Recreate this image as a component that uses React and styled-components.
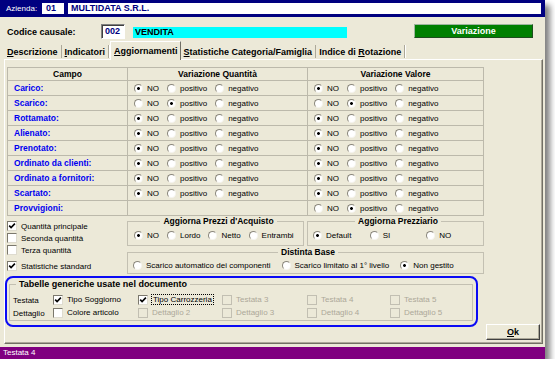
import React from 'react'
import styled, { createGlobalStyle } from 'styled-components'

const GlobalStyle = createGlobalStyle`
    html, body {
        margin: 0;
        padding: 0;
        background: #fff;
    }
    body {
        font-family: 'Liberation Sans', Arial, sans-serif;
    }
`

const Window = styled.div`
    width: 545px;
    height: 359px;
    display: flex;
    flex-direction: column;
    background: #ece9d8;
    box-shadow: 5px 5px 6px rgba(0, 0, 0, 0.5);
    font-size: 8px;
    color: #000;
`

const TopBar = styled.div`
    height: 17px;
    flex: none;
    display: flex;
    align-items: center;
    padding: 0 4px 0 6px;
    background: #000080;
`

const TopLabel = styled.span`
    width: 36px;
    color: #fff;
    font-size: 8px;
`

const TopField = styled.div`
    height: 11px;
    line-height: 11px;
    margin-left: ${(props) => props.$gap}px;
    padding-left: ${(props) => props.$pad}px;
    width: ${(props) => (props.$w ? props.$w + 'px' : 'auto')};
    flex: ${(props) => (props.$w ? 'none' : 1)};
    background: #fff;
    color: #000080;
    font-size: 9px;
    font-weight: bold;
`

const CausaleRow = styled.div`
    height: 25px;
    flex: none;
    box-sizing: border-box;
    padding: 3px 0 0 7px;
    display: flex;
    align-items: center;
`

const CausaleLabel = styled.span`
    width: 94px;
    font-size: 9px;
    font-weight: bold;
    padding-top: 2px;
`

const CodeBox = styled.div`
    width: 24px;
    height: 15px;
    box-sizing: border-box;
    border: 1px solid;
    border-color: #808080 #fff #fff #808080;
    box-shadow: inset 1px 1px 0 #404040;
    background: #fff;
    color: #000080;
    font-size: 9px;
    font-weight: bold;
    line-height: 13px;
    padding-left: 3px;
`

const CausaleName = styled.div`
    width: 212px;
    height: 11px;
    margin: 2px 0 0 8px;
    padding-left: 2px;
    background: #00ffff;
    font-size: 9px;
    font-weight: bold;
    line-height: 11px;
`

const ModeButton = styled.div`
    width: 119px;
    height: 14px;
    margin: 0 12px 0 auto;
    box-sizing: border-box;
    border: 1px solid;
    border-color: #9db59d #1d4d1d #1d4d1d #9db59d;
    background: #008000;
    color: #fff;
    font-size: 9px;
    font-weight: bold;
    line-height: 12px;
    text-align: center;
`

const TabStrip = styled.div`
    height: 17px;
    flex: none;
    display: flex;
    align-items: flex-end;
    padding-left: 4px;
`

const Tab = styled.div`
    position: relative;
    z-index: ${(props) => (props.$active ? 1 : 0)};
    height: ${(props) => (props.$active ? 19 : 13)}px;
    margin-bottom: ${(props) => (props.$active ? -1 : 1)}px;
    margin-left: ${(props) => (props.$active ? 1 : 0)}px;
    box-sizing: border-box;
    display: flex;
    align-items: center;
    padding: 0 ${(props) => (props.$active ? 2 : 3)}px 0 3px;
    font-size: 9px;
    font-weight: bold;
    background: #ece9d8;
    border-right: 1px solid ${(props) => (props.$active ? '#716f64' : '#aca899')};
    border-left: ${(props) => (props.$active ? '1px solid #fff' : 'none')};
    border-top: ${(props) => (props.$active ? '1px solid #fff' : 'none')};
    box-shadow: ${(props) => (props.$active ? 'none' : '1px 0 0 #fff')};
`

const Panel = styled.div`
    flex: 1;
    margin: 0 2px 3px 4px;
    padding: 7px 0 0 0;
    display: flex;
    flex-direction: column;
    border-top: 1px solid #fff;
    border-left: 1px solid #fff;
    border-right: 1px solid #716f64;
    border-bottom: 1px solid #716f64;
    box-shadow: inset -1px -1px 0 #aca899;
`

const Grid = styled.div`
    display: grid;
    grid-template-columns: 120px 180px 176px;
    margin-left: 2px;
    width: fit-content;
    border-top: 1px solid #bcb9ab;
    border-left: 1px solid #bcb9ab;
`

const Cell = styled.div`
    height: ${(props) => (props.$head ? 13 : 15)}px;
    box-sizing: border-box;
    display: flex;
    align-items: center;
    justify-content: ${(props) => (props.$head ? 'center' : 'flex-start')};
    padding-left: ${(props) => (props.$head ? 0 : 6)}px;
    border-right: 1px solid #bcb9ab;
    border-bottom: 1px solid #bcb9ab;
    font-size: ${(props) => (props.$head || props.$field ? 8.5 : 8)}px;
    font-weight: ${(props) => (props.$head || props.$field ? 'bold' : 'normal')};
    color: ${(props) => (props.$field ? '#0000f0' : '#000')};
    gap: 8px;
`

const Option = styled.span`
    display: inline-flex;
    align-items: center;
    gap: 4px;
    font-size: 8px;
    white-space: nowrap;
`

const RadioMark = styled.span`
    flex: none;
    width: 9px;
    height: 9px;
    box-sizing: border-box;
    border-radius: 50%;
    border: 1px solid;
    border-color: #8a877b #f5f4ee #f5f4ee #8a877b;
    background: ${(props) =>
        props.$on
            ? 'radial-gradient(circle, #000 0 1.1px, #fff 1.7px)'
            : '#fff'};
`

const BoxMark = styled.span`
    flex: none;
    width: 10px;
    height: 10px;
    box-sizing: border-box;
    display: flex;
    align-items: center;
    justify-content: center;
    border: 1px solid;
    border-color: ${(props) =>
        props.$off ? '#c2bfb2' : '#7b786d #dedbcf #dedbcf #7b786d'};
    background: ${(props) => (props.$off ? '#ece9d8' : '#fff')};
`

const CheckText = styled.span`
    color: ${(props) => (props.$off ? '#aca899' : '#000')};
    outline: ${(props) => (props.$focus ? '1px dotted #000' : 'none')};
    padding: ${(props) => (props.$focus ? '0 1px' : '0')};
    font-size: 8px;
    white-space: nowrap;
`

const CheckRow = styled.label`
    height: 12px;
    display: flex;
    align-items: center;
    gap: ${(props) => props.$gap || 4}px;
    margin-top: ${(props) => props.$top || 0}px;
`

const Lower = styled.div`
    display: flex;
    margin-left: 2px;
`

const Checks = styled.div`
    width: 120px;
    display: flex;
    flex-direction: column;
    padding-top: 4px;
`

const Options = styled.div`
    width: 357px;
    display: flex;
    flex-direction: column;
`

const GroupRow = styled.div`
    display: flex;
    gap: 3px;
`

const Group = styled.fieldset`
    width: ${(props) => (props.$w ? props.$w + 'px' : 'auto')};
    box-sizing: border-box;
    min-width: 0;
    margin: ${(props) => props.$top || 0}px 0 0 0;
    padding: ${(props) => props.$pad || '3px 0 4px 5px'};
    border: 1px solid #c3c0b2;
    display: ${(props) => (props.$grid ? 'grid' : 'flex')};
    grid-template-columns: repeat(3, 1fr);
    align-items: center;
`

const Legend = styled.legend`
    margin: 0 auto 0 ${(props) => (props.$left ? '3px' : 'auto')};
    padding: 0 3px;
    font-size: ${(props) => props.$size || 8.5}px;
    font-weight: bold;
    line-height: 10px;
`

const OptionRow = styled.div`
    height: 10px;
    display: flex;
    align-items: center;
    gap: ${(props) => props.$gap}px;
`

const Bottom = styled.div`
    display: flex;
    align-items: flex-start;
    margin-top: 2px;
`

const BlueFrame = styled.div`
    width: 473px;
    height: 51px;
    box-sizing: border-box;
    padding: 1px 3px 0 2px;
    border: 2px solid #0a0af5;
    border-radius: 8px;
`

const TableBox = styled.fieldset`
    margin: 0;
    min-width: 0;
    padding: 4px 0 1px 3px;
    border: 1px solid #c3c0b2;
    display: grid;
    grid-template-columns: 40px 85px 84px 85px 83px auto;
    grid-auto-rows: 13px;
    align-items: center;
`

const RowLabel = styled.span`
    font-size: 8px;
    padding-top: 2px;
`

const OkButton = styled.div`
    width: 54px;
    height: 16px;
    margin: 48px 0 0 8px;
    box-sizing: border-box;
    border: 1px solid;
    border-color: #fff #404040 #404040 #fff;
    box-shadow: inset -1px -1px 0 #aca899;
    font-size: 9px;
    font-weight: bold;
    line-height: 14px;
    text-align: center;
`

const StatusBar = styled.div`
    height: 12px;
    flex: none;
    padding-left: 3px;
    background: #800080;
    color: #fff;
    font-size: 8px;
    line-height: 12px;
`

const Radio = ({ on, children }) => (
    <Option>
        <RadioMark $on={on} />
        {children}
    </Option>
)

const Check = ({ on, off, focus, gap, top, children }) => (
    <CheckRow $gap={gap} $top={top}>
        <BoxMark $off={off}>
            {on && (
                <svg width='8' height='8' viewBox='0 0 8 8'>
                    <path
                        d='M1.2 3.6 L3.1 5.6 L6.9 1.6'
                        stroke='#000'
                        strokeWidth='1.6'
                        fill='none'
                    />
                </svg>
            )}
        </BoxMark>
        <CheckText $off={off} $focus={focus}>
            {children}
        </CheckText>
    </CheckRow>
)

const rows = [
    ['Carico:', 'NO', 'NO'],
    ['Scarico:', 'positivo', 'positivo'],
    ['Rottamato:', 'NO', 'NO'],
    ['Alienato:', 'NO', 'NO'],
    ['Prenotato:', 'NO', 'NO'],
    ['Ordinato da clienti:', 'NO', 'NO'],
    ['Ordinato a fornitori:', 'NO', 'NO'],
    ['Scartato:', 'NO', 'NO'],
    ['Provvigioni:', null, 'positivo'],
]

const choices = ['NO', 'positivo', 'negativo']

const Choice = ({ value }) =>
    value
        ? choices.map((c) => (
              <Radio key={c} on={c === value}>
                  {c}
              </Radio>
          ))
        : null

const App = () => {
    return (
        <>
            <GlobalStyle />
            <Window>
                <TopBar>
                    <TopLabel>Azienda:</TopLabel>
                    <TopField $w={18} $gap={0} $pad={4}>
                        01
                    </TopField>
                    <TopField $gap={4} $pad={3}>
                        MULTIDATA S.R.L.
                    </TopField>
                </TopBar>

                <CausaleRow>
                    <CausaleLabel>Codice causale:</CausaleLabel>
                    <CodeBox>002</CodeBox>
                    <CausaleName>VENDITA</CausaleName>
                    <ModeButton>Variazione</ModeButton>
                </CausaleRow>

                <TabStrip>
                    <Tab>
                        <span>
                            <u>D</u>escrizione
                        </span>
                    </Tab>
                    <Tab>
                        <span>
                            <u>I</u>ndicatori
                        </span>
                    </Tab>
                    <Tab $active>
                        <span>
                            <u>A</u>ggiornamenti
                        </span>
                    </Tab>
                    <Tab>
                        <span>
                            <u>S</u>tatistiche Categoria/Famiglia
                        </span>
                    </Tab>
                    <Tab>
                        <span>
                            Indice di <u>R</u>otazione
                        </span>
                    </Tab>
                </TabStrip>

                <Panel>
                    <Grid>
                        <Cell $head>Campo</Cell>
                        <Cell $head>Variazione Quantità</Cell>
                        <Cell $head>Variazione Valore</Cell>
                        {rows.map(([name, qty, val]) => (
                            <React.Fragment key={name}>
                                <Cell $field>{name}</Cell>
                                <Cell>
                                    <Choice value={qty} />
                                </Cell>
                                <Cell>
                                    <Choice value={val} />
                                </Cell>
                            </React.Fragment>
                        ))}
                    </Grid>

                    <Lower>
                        <Checks>
                            <Check on>Quantità principale</Check>
                            <Check>Seconda quantità</Check>
                            <Check>Terza quantità</Check>
                            <Check on top={4}>
                                Statistiche standard
                            </Check>
                        </Checks>
                        <Options>
                            <GroupRow>
                                <Group $w={177} $pad='4px 0 5px 6px'>
                                    <Legend>Aggiorna Prezzi d'Acquisto</Legend>
                                    <OptionRow $gap={8}>
                                        <Radio on>NO</Radio>
                                        <Radio>Lordo</Radio>
                                        <Radio>Netto</Radio>
                                        <Radio>Entrambi</Radio>
                                    </OptionRow>
                                </Group>
                                <Group $w={177} $grid $pad='4px 0 5px 5px'>
                                    <Legend>Aggiorna Prezziario</Legend>
                                    <Radio on>Default</Radio>
                                    <Radio>SI</Radio>
                                    <Radio>NO</Radio>
                                </Group>
                            </GroupRow>
                            <Group $top={1} $pad='3px 0 3px 5px'>
                                <Legend>Distinta Base</Legend>
                                <OptionRow $gap={11}>
                                    <Radio>
                                        Scarico automatico dei componenti
                                    </Radio>
                                    <Radio>Scarico limitato al 1° livello</Radio>
                                    <Radio on>Non gestito</Radio>
                                </OptionRow>
                            </Group>
                        </Options>
                    </Lower>

                    <Bottom>
                        <BlueFrame>
                            <TableBox>
                                <Legend $left $size={9}>
                                    Tabelle generiche usate nel documento
                                </Legend>
                                <RowLabel>Testata</RowLabel>
                                <Check on>Tipo Soggiorno</Check>
                                <Check on focus>
                                    Tipo Carrozzeria
                                </Check>
                                <Check off>Testata 3</Check>
                                <Check off>Testata 4</Check>
                                <Check off>Testata 5</Check>
                                <RowLabel>Dettaglio</RowLabel>
                                <Check>Colore articolo</Check>
                                <Check off>Dettaglio 2</Check>
                                <Check off>Dettaglio 3</Check>
                                <Check off>Dettaglio 4</Check>
                                <Check off>Dettaglio 5</Check>
                            </TableBox>
                        </BlueFrame>
                        <OkButton>
                            <u>O</u>k
                        </OkButton>
                    </Bottom>
                </Panel>

                <StatusBar>Testata 4</StatusBar>
            </Window>
        </>
    )
}

export default App
